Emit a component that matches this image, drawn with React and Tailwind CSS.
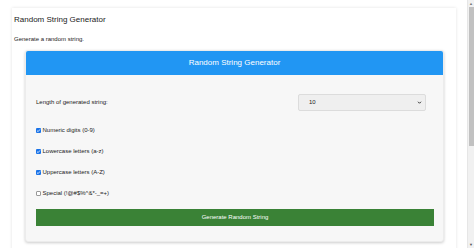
import React, { useState } from "react";

const font = { fontFamily: '"Liberation Sans", Arial, sans-serif' };

const options = [
  { key: "digits", label: "Numeric digits (0-9)", on: true },
  { key: "lower", label: "Lowercase letters (a-z)", on: true },
  { key: "upper", label: "Uppercase letters (A-Z)", on: true },
  { key: "special", label: "Special (!@#$%^&*-_=+)", on: false },
];

function Box({ checked }) {
  return checked ? (
    <span className="w-[5px] h-[5px] rounded-[1px] bg-[#1a73e8] flex items-center justify-center">
      <svg viewBox="0 0 10 10" className="w-[5px] h-[5px]">
        <path d="M2 5.2 L4.2 7.3 L8 2.8" fill="none" stroke="white" strokeWidth="1.6" />
      </svg>
    </span>
  ) : (
    <span className="w-[5px] h-[5px] rounded-[1px] bg-white border-[0.5px] border-[#999]" />
  );
}

export default function App() {
  const [checks, setChecks] = useState(
    Object.fromEntries(options.map((o) => [o.key, o.on]))
  );

  return (
    <div className="flex h-[248px] overflow-hidden bg-white text-[#222]" style={font}>
      <div className="flex-1 pl-[12px] pr-[11px] pt-[8px]">
        <div className="bg-white shadow-[0_0_3px_rgba(0,0,0,0.12)] pt-[4px] pl-[2px] h-[300px]">
          <h1 className="h-[16px] leading-[16px] text-[8px]">Random String Generator</h1>
          <p className="mt-[7px] h-[8px] leading-[8px] text-[6px]">Generate a random string.</p>

          <div className="mt-[7px] ml-[11px] mr-[12px] rounded-[3px] bg-[#f7f7f7] border border-[#ececec] shadow-[0_1px_3px_rgba(0,0,0,0.2)] overflow-hidden">
            <div className="h-[24px] bg-[#2196f3] text-white text-[8px] flex items-center justify-center">
              Random String Generator
            </div>

            <div className="pl-[10px] pr-[9px] pt-[19px] pb-[15px]">
              <div className="flex items-center justify-between">
                <span className="text-[6px]">Length of generated string:</span>
                <div className="w-[128px] h-[17px] mr-[8px] rounded-[2px] bg-[#efefef] border border-[#dcdcdc] flex items-center justify-between pl-[10px] pr-[3px] text-[6px]">
                  <span>10</span>
                  <svg viewBox="0 0 10 10" className="w-[5px] h-[5px]">
                    <path d="M2 3.5 L5 6.5 L8 3.5" fill="none" stroke="#222" strokeWidth="1.8" />
                  </svg>
                </div>
              </div>

              <div className="mt-[9px]">
                {options.map((o) => (
                  <label
                    key={o.key}
                    className="h-[21px] flex items-center gap-[1.5px] text-[6px] cursor-pointer"
                    onClick={() => setChecks((c) => ({ ...c, [o.key]: !c[o.key] }))}
                  >
                    <Box checked={checks[o.key]} />
                    <span>{o.label}</span>
                  </label>
                ))}
              </div>

              <button className="mt-[5px] w-full h-[17px] bg-[#3a8236] text-white text-[6px] flex items-center justify-center">
                Generate Random String
              </button>
            </div>
          </div>
        </div>
      </div>

      {/* scrollbar */}
      <div className="w-[7px] bg-[#f1f1f1] border-l border-[#e6e6e6] flex flex-col items-center">
        <span className="mt-[2px] h-[3px] text-[4px] leading-[3px] text-[#777]">▲</span>
        <div className="mt-[2px] w-[5px] h-[139px] bg-[#c1c1c1]" />
        <div className="flex-1" />
        <span className="mb-[2px] h-[3px] text-[4px] leading-[3px] text-[#555]">▼</span>
      </div>
    </div>
  );
}
